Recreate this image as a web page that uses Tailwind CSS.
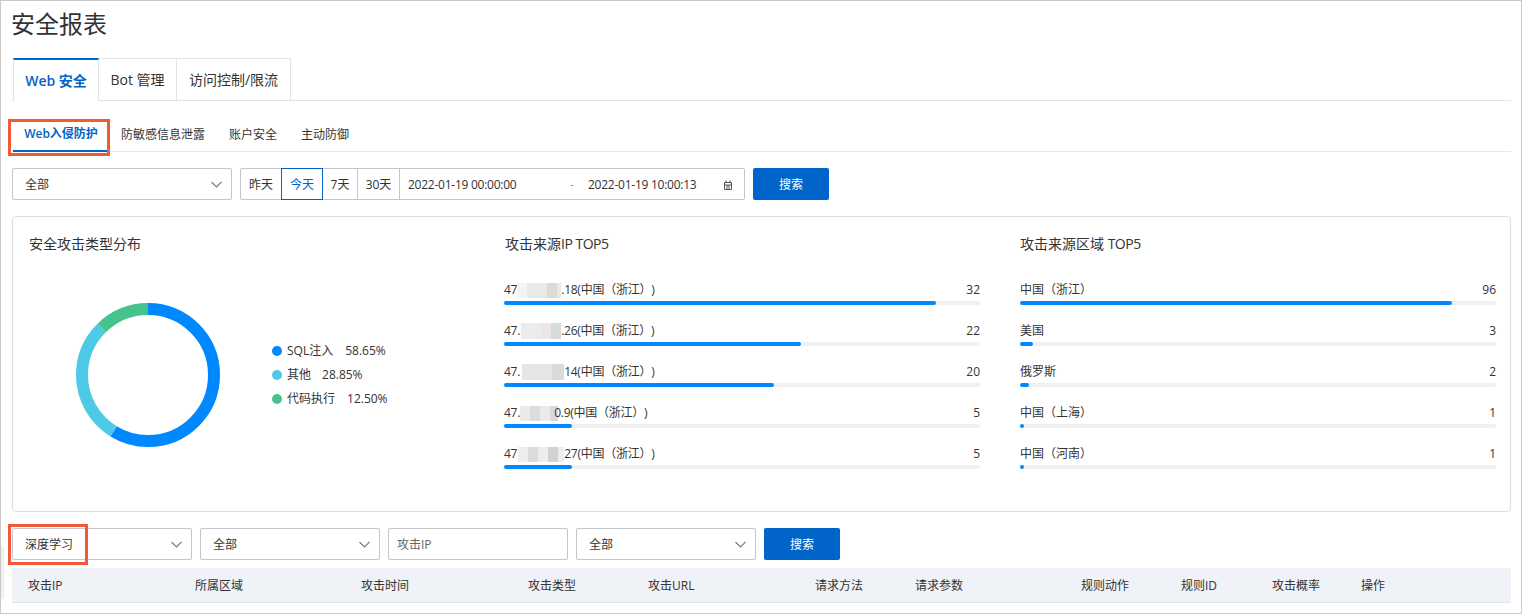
<!DOCTYPE html>
<html lang="zh-CN">
<head>
    <meta charset="UTF-8">
    <title>安全报表</title>
    <script src="https://cdn.jsdelivr.net/npm/@tailwindcss/browser@4"></script>
</head>
<body class="bg-white overflow-hidden">
<div class="relative h-[614px] w-[1522px] overflow-hidden border border-[#c9c9c9] pl-[11px] pr-[10px] text-[12px] text-[#333] font-['Open_Sans','Noto_Sans_CJK_SC',sans-serif]">

    <!-- Title -->
    <h1 class="h-[57px] pt-[5px] -ml-px text-[24px] leading-[36px] font-normal">安全报表</h1>

    <!-- Tabs -->
    <div class="flex h-[43px] border-b border-[#e1e3e6] text-[14px]">
        <div class="flex h-[43px] w-[86px] ml-px items-center justify-center border-t-2 border-x border-t-[#0064c8] border-x-[#e1e3e6] bg-white font-semibold text-[#0064c8]">Web 安全</div>
        <div class="flex h-[42px] w-[78px] items-center justify-center border-t border-r border-[#e1e3e6]">Bot 管理</div>
        <div class="flex h-[42px] w-[114px] items-center justify-center border-t border-r border-[#e1e3e6]">访问控制/限流</div>
    </div>

    <!-- Sub tabs -->
    <div class="mt-[17px] flex h-[34px] border-b border-[#e8e9eb]">
        <div class="flex w-[96px] h-[34px] items-center justify-center border-b-2 border-[#0064c8] font-semibold text-[#0064c8] ml-px">Web入侵防护</div>
        <div class="ml-[12px] flex items-center">防敏感信息泄露</div>
        <div class="ml-[24px] flex items-center">账户安全</div>
        <div class="ml-[24px] flex items-center">主动防御</div>
    </div>

    <!-- Filter -->
    <div class="mt-[16px] flex h-[32px]">
        <div class="flex w-[220px] items-center justify-between rounded-[2px] border border-[#c4c6cc] pl-[12px] pr-[9px]">
            <span class="pt-px">全部</span>
            <svg width="11" height="7" viewBox="0 0 11 7" fill="none" stroke="#7a7f87" stroke-width="1.2"><path d="M0.5 1 5.5 6 10.5 1"/></svg>
        </div>
        <div class="ml-[8px] flex w-[505px] rounded-[2px] border border-[#c4c6cc]">
            <div class="flex w-[40px] items-center justify-center pt-px">昨天</div>
            <div class="flex w-[42px] -my-px items-center justify-center border border-[#0064c8] pt-px text-[#0064c8]">今天</div>
            <div class="flex w-[35px] items-center justify-center border-r border-[#c4c6cc] pt-px">7天</div>
            <div class="flex w-[42px] items-center justify-center border-r border-[#c4c6cc] pt-px">30天</div>
            <div class="flex flex-1 items-center pl-[8px] pr-[11px] pt-px tracking-[-0.25px]">
                <span class="w-[143px]">2022-01-19 00:00:00</span>
                <span class="w-[37px] pl-[19px] text-[#999]">-</span>
                <span class="flex-1">2022-01-19 10:00:13</span>
                <svg width="10" height="10" viewBox="0 0 10 10" fill="none" stroke="#555" stroke-width="1"><path d="M1.5 2.5h7v7h-7zM1.5 5h7M3 .5v2M7 .5v2M4 5v4M6 5v4"/></svg>
            </div>
        </div>
        <button class="ml-[8px] w-[76px] rounded-[2px] bg-[#0064c8] pt-px text-white">搜索</button>
    </div>

    <!-- Charts card -->
    <div class="mt-[16px] flex h-[296px] rounded-[4px] border border-[#dcdee3] pl-[16px] pt-[17px]">
        <div class="w-[475px]">
            <div class="h-[20px] text-[14px] leading-[20px]">安全攻击类型分布</div>
            <div class="mt-[49px] flex items-center">
                <svg class="ml-[47px]" width="144" height="144" viewBox="0 0 144 144">
                    <g fill="none" stroke-width="12" transform="rotate(-90 72 72)">
                        <circle cx="72" cy="72" r="66" stroke="#0088ff" stroke-dasharray="243.2 414.7"/>
                        <circle cx="72" cy="72" r="66" stroke="#4ecae6" stroke-dasharray="119.6 414.7" stroke-dashoffset="-243.2"/>
                        <circle cx="72" cy="72" r="66" stroke="#45c38c" stroke-dasharray="51.9 414.7" stroke-dashoffset="-362.8"/>
                    </g>
                </svg>
                <div class="ml-[52px] flex flex-col gap-[6px]">
                    <div class="flex h-[18px] items-center"><span class="h-[10px] w-[10px] rounded-full bg-[#0088ff]"></span><span class="ml-[5px]">SQL注入</span><span class="ml-[12px]">58.65%</span></div>
                    <div class="flex h-[18px] items-center"><span class="h-[10px] w-[10px] rounded-full bg-[#4ecae6]"></span><span class="ml-[5px]">其他</span><span class="ml-[11px]">28.85%</span></div>
                    <div class="flex h-[18px] items-center"><span class="h-[10px] w-[10px] rounded-full bg-[#45c38c]"></span><span class="ml-[5px]">代码执行</span><span class="ml-[12px]">12.50%</span></div>
                </div>
            </div>
        </div>

        <!-- Source IP -->
        <div class="w-[476px]">
            <div class="h-[20px] pl-px text-[14px] leading-[20px]">攻击来源<span class="tracking-[-0.5px]">IP TOP5</span></div>
            <div class="mt-[28px] flex flex-col gap-[18px]">
                <div>
                    <div class="flex h-[16px] items-center justify-between leading-[16px]">
                        <span class="flex items-center tracking-[-0.25px]">47<i class="flex h-[15px] w-[44px] bg-[#e9e9e8]"><b class="w-[10px] bg-[#f4f4f4]"></b><b class="ml-[20px] w-[10px] bg-[#dcdbd8]"></b></i>.18(中国（浙江）<span>)</span></span><span>32</span>
                    </div>
                    <div class="mt-[3px] h-[4px] rounded-full bg-[#f0f0f0]"><div class="h-full rounded-full bg-[#0088ff]" style="width:432px"></div></div>
                </div>
                <div>
                    <div class="flex h-[16px] items-center justify-between leading-[16px]">
                        <span class="flex items-center tracking-[-0.25px]">47.<i class="ml-px flex h-[16px] w-[40px] bg-[#ececec]"><b class="ml-[20px] w-[10px] bg-[#ece6e6]"></b><b class="w-[10px] bg-[#d8dade]"></b></i>.26(中国（浙江）<span>)</span></span><span>22</span>
                    </div>
                    <div class="mt-[3px] h-[4px] rounded-full bg-[#f0f0f0]"><div class="h-full rounded-full bg-[#0088ff]" style="width:297px"></div></div>
                </div>
                <div>
                    <div class="flex h-[16px] items-center justify-between leading-[16px]">
                        <span class="flex items-center tracking-[-0.25px]">47.<i class="ml-[2px] flex h-[16px] w-[42px] bg-[#e6e6e6]"><b class="ml-[20px] w-[10px] bg-[#e8e6e2]"></b><b class="w-[12px] bg-[#d9dadb]"></b></i>14(中国（浙江）<span>)</span></span><span>20</span>
                    </div>
                    <div class="mt-[3px] h-[4px] rounded-full bg-[#f0f0f0]"><div class="h-full rounded-full bg-[#0088ff]" style="width:270px"></div></div>
                </div>
                <div>
                    <div class="flex h-[16px] items-center justify-between leading-[16px]">
                        <span class="flex items-center tracking-[-0.25px]">47.<i class="-mr-[4px] flex h-[15px] w-[38px] bg-[#eceae8]"><b class="ml-[10px] w-[10px] bg-[#d8dde0]"></b><b class="ml-[10px] w-[8px] bg-[#d8dadd]"></b></i>0.9(中国（浙江）<span>)</span></span><span>5</span>
                    </div>
                    <div class="mt-[3px] h-[4px] rounded-full bg-[#f0f0f0]"><div class="h-full rounded-full bg-[#0088ff]" style="width:68px"></div></div>
                </div>
                <div>
                    <div class="flex h-[16px] items-center justify-between leading-[16px]">
                        <span class="flex items-center tracking-[-0.25px]">47<i class="ml-px flex h-[15px] w-[46px] bg-[#ededed]"><b class="ml-[10px] w-[10px] bg-[#dcdbd9]"></b><b class="ml-[10px] w-[10px] bg-[#d3d2d1]"></b></i>27(中国（浙江）<span>)</span></span><span>5</span>
                    </div>
                    <div class="mt-[3px] h-[4px] rounded-full bg-[#f0f0f0]"><div class="h-full rounded-full bg-[#0088ff]" style="width:68px"></div></div>
                </div>
            </div>
        </div>

        <!-- Source region -->
        <div class="ml-[40px] w-[476px]">
            <div class="h-[20px] text-[14px] leading-[20px]">攻击来源区域 <span class="tracking-[-0.5px]">TOP5</span></div>
            <div class="mt-[28px] flex flex-col gap-[18px]">
                <div>
                    <div class="flex h-[16px] items-center justify-between"><span>中国（浙江）</span><span>96</span></div>
                    <div class="mt-[3px] h-[4px] rounded-full bg-[#f0f0f0]"><div class="h-full rounded-full bg-[#0088ff]" style="width:432px"></div></div>
                </div>
                <div>
                    <div class="flex h-[16px] items-center justify-between"><span>美国</span><span>3</span></div>
                    <div class="mt-[3px] h-[4px] rounded-full bg-[#f0f0f0]"><div class="h-full rounded-full bg-[#0088ff]" style="width:13px"></div></div>
                </div>
                <div>
                    <div class="flex h-[16px] items-center justify-between"><span>俄罗斯</span><span>2</span></div>
                    <div class="mt-[3px] h-[4px] rounded-full bg-[#f0f0f0]"><div class="h-full rounded-full bg-[#0088ff]" style="width:9px"></div></div>
                </div>
                <div>
                    <div class="flex h-[16px] items-center justify-between"><span>中国（上海）</span><span>1</span></div>
                    <div class="mt-[3px] h-[4px] rounded-full bg-[#f0f0f0]"><div class="h-full rounded-full bg-[#0088ff]" style="width:4px"></div></div>
                </div>
                <div>
                    <div class="flex h-[16px] items-center justify-between"><span>中国（河南）</span><span>1</span></div>
                    <div class="mt-[3px] h-[4px] rounded-full bg-[#f0f0f0]"><div class="h-full rounded-full bg-[#0088ff]" style="width:4px"></div></div>
                </div>
            </div>
        </div>
    </div>

    <!-- Table filters -->
    <div class="mt-[16px] flex h-[32px] gap-[8px]">
        <div class="flex w-[180px] items-center justify-between rounded-[2px] border border-[#c4c6cc] pl-[12px] pr-[9px]">
            <span class="pt-px">深度学习</span>
            <svg width="11" height="7" viewBox="0 0 11 7" fill="none" stroke="#7a7f87" stroke-width="1.2"><path d="M0.5 1 5.5 6 10.5 1"/></svg>
        </div>
        <div class="flex w-[180px] items-center justify-between rounded-[2px] border border-[#c4c6cc] pl-[12px] pr-[9px]">
            <span class="pt-px">全部</span>
            <svg width="11" height="7" viewBox="0 0 11 7" fill="none" stroke="#7a7f87" stroke-width="1.2"><path d="M0.5 1 5.5 6 10.5 1"/></svg>
        </div>
        <div class="flex w-[180px] items-center rounded-[2px] border border-[#c4c6cc] pl-[8px] pt-px text-[#666]">攻击IP</div>
        <div class="flex w-[180px] items-center justify-between rounded-[2px] border border-[#c4c6cc] pl-[12px] pr-[9px]">
            <span class="pt-px">全部</span>
            <svg width="11" height="7" viewBox="0 0 11 7" fill="none" stroke="#7a7f87" stroke-width="1.2"><path d="M0.5 1 5.5 6 10.5 1"/></svg>
        </div>
        <button class="w-[76px] rounded-[2px] bg-[#0064c8] pt-px text-white">搜索</button>
    </div>

    <!-- Table head -->
    <div class="mt-[8px] flex h-[35px] items-center border-b border-[#e1e3e6] bg-[#eff2f6] pl-[16px] pt-[2px]">
        <div class="w-[167px]">攻击IP</div>
        <div class="w-[166px]">所属区域</div>
        <div class="w-[167px]">攻击时间</div>
        <div class="w-[120px]">攻击类型</div>
        <div class="w-[167px]">攻击URL</div>
        <div class="w-[100px]">请求方法</div>
        <div class="w-[166px]">请求参数</div>
        <div class="w-[100px]">规则动作</div>
        <div class="w-[91px]">规则ID</div>
        <div class="w-[89px]">攻击概率</div>
        <div>操作</div>
    </div>

    <!-- Red annotation boxes -->
    <div class="absolute left-[7px] top-[118px] h-[37px] w-[102px] border-[3px] border-[#f25a35]"></div>
    <div class="absolute left-[7px] top-[523px] h-[41px] w-[80px] border-[3px] border-[#f25a35]"></div>
    <!-- scrollbar sliver on the left edge -->
    <div class="absolute left-0 top-[546px] h-[52px] w-[3px] bg-[#f0f0f0]"></div>
</div>
</body>
</html>
